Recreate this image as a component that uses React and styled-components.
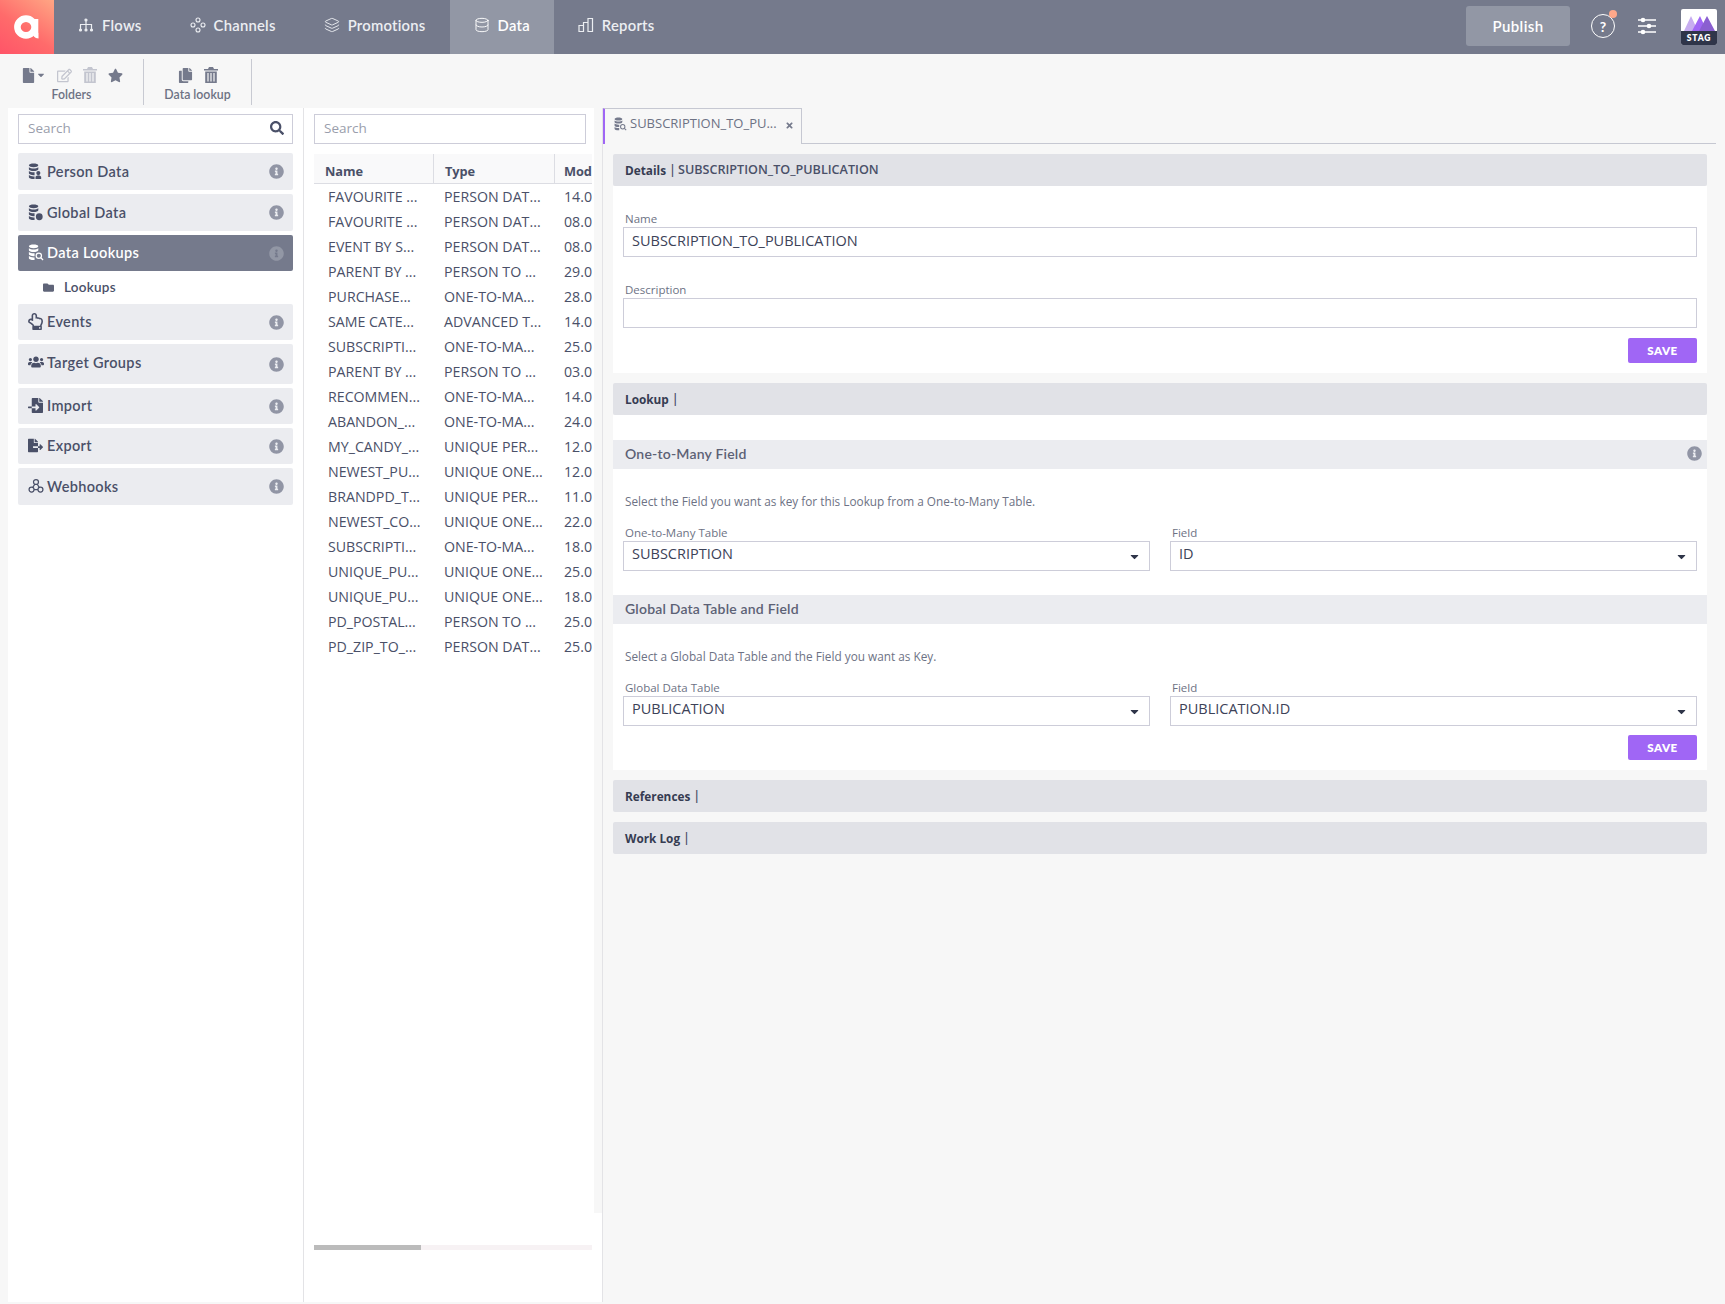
import React from 'react';
import styled, { createGlobalStyle } from 'styled-components';
import { Database, Layers } from 'lucide-react';
import {
  FaFile, FaRegEdit, FaStar, FaCopy, FaInfoCircle, FaFolder, FaTimes, FaSearch,
  FaRegHandPointUp, FaUsers, FaFileImport, FaFileExport, FaCaretDown,
} from 'react-icons/fa';

const UI = '"Lato", "Open Sans", sans-serif';
const BODY = '"Open Sans", "Lato", sans-serif';

const Global = createGlobalStyle`
  html, body { margin: 0; padding: 0; background: #f7f7f7; }
  * { box-sizing: border-box; }
`;

const Page = styled.div`
  width: 1725px;
  height: 1304px;
  background: #f7f7f7;
  display: flex;
  flex-direction: column;
  font-family: ${UI};
  color: #4a5068;
  overflow: hidden;
`;

const TopBar = styled.header`
  height: 54px;
  flex: none;
  display: flex;
  align-items: stretch;
  background: #757a8c;
`;

const Logo = styled.div`
  width: 54px;
  background: linear-gradient(215deg, #ffa684 0%, #ff6b6b 55%, #ff5468 100%);
  display: flex;
  align-items: center;
  justify-content: center;
`;

const NavItem = styled.div`
  display: flex;
  align-items: center;
  gap: 8px;
  padding: 0 24px 4px;
  font-size: 14.8px;
  font-weight: 600;
  letter-spacing: 0.25px;
  color: ${(p) => (p.$active ? '#ffffff' : '#eceef2')};
  background: ${(p) => (p.$active ? '#9297a5' : 'transparent')};
`;

const TopRight = styled.div`
  margin-left: auto;
  display: flex;
  align-items: center;
  padding: 0 8px 0 0;
`;

const Publish = styled.div`
  width: 104px;
  height: 40px;
  margin-bottom: 2px;
  border-radius: 3px;
  background: #9297a5;
  color: #fff;
  font-size: 15px;
  font-weight: 600;
  letter-spacing: 0.4px;
  display: flex;
  align-items: center;
  justify-content: center;
  margin-right: 21px;
`;

const HelpWrap = styled.div`
  position: relative;
  width: 24px;
  height: 24px;
  margin-bottom: 2px;
  border: 1.3px solid #fff;
  border-radius: 50%;
  color: #fff;
  font-size: 14px;
  font-weight: 700;
  display: flex;
  align-items: center;
  justify-content: center;
  margin-right: 22px;
`;

const HelpDot = styled.span`
  position: absolute;
  top: -5px;
  right: -3px;
  width: 8px;
  height: 8px;
  border-radius: 50%;
  background: #ffa88a;
`;

const SliderWrap = styled.span`
  display: inline-flex;
  margin-bottom: 2px;
`;

const Stag = styled.div`
  width: 36px;
  height: 36px;
  margin-left: 24px;
  border-radius: 2px;
  overflow: hidden;
  background: #fff;
  display: flex;
  flex-direction: column;
`;

const StagArt = styled.div`
  height: 22px;
  display: flex;
  align-items: flex-end;
  justify-content: center;
`;

const StagText = styled.div`
  flex: 1;
  background: #2f3549;
  color: #fff;
  font-size: 8.5px;
  font-weight: 800;
  letter-spacing: 0.8px;
  display: flex;
  align-items: center;
  justify-content: center;
`;

const Toolbar = styled.div`
  height: 54px;
  flex: none;
  display: flex;
  padding-top: 5px;
`;

const ToolGroup = styled.div`
  width: ${(p) => p.$w}px;
  height: 46px;
  border-right: 1px solid #c8cad2;
  display: flex;
  flex-direction: column;
  align-items: center;
`;

const ToolIcons = styled.div`
  height: 26px;
  display: flex;
  align-items: center;
  gap: ${(p) => p.$gap || 11}px;
  margin-top: 2px;
  padding-top: 2px;
`;

const ToolLabel = styled.div`
  font-size: 12.3px;
  font-weight: 600;
  color: #6d7284;
  margin-top: 0;
`;

const Tool = styled.span`
  display: inline-flex;
  align-items: center;
  color: ${(p) => (p.$off ? '#c3c5cf' : '#757a8c')};
`;

const Main = styled.div`
  flex: 1;
  display: flex;
  padding-left: 8px;
  min-height: 0;
  margin-bottom: 2px;
`;

const LeftPanel = styled.aside`
  width: 296px;
  background: #fff;
  border-right: 1px solid #e3e3e6;
  padding: 6px 10px 0;
`;

const SearchBox = styled.div`
  height: 30px;
  border: 1px solid #cdcdd9;
  background: #fff;
  display: flex;
  align-items: center;
  justify-content: space-between;
  padding: 0 8px 2px 9px;
  font-family: ${BODY};
  font-size: 13.5px;
  color: #9a9eac;
`;

const SideList = styled.div`
  margin-top: ${(p) => p.$mt ?? 9}px;
  display: flex;
  flex-direction: column;
  gap: 4px;
`;

const SideItem = styled.div`
  height: ${(p) => p.$h || 36}px;
  border-radius: 2px;
  display: flex;
  align-items: center;
  padding: 0 9px ${(p) => (p.$h === 40 ? 4 : 1)}px;
  background: ${(p) => (p.$active ? '#757a8c' : '#ebecf0')};
  color: ${(p) => (p.$active ? '#fff' : '#4a5068')};
  font-size: 14.5px;
  font-weight: 600;
  letter-spacing: 0.35px;
`;

const SideIcon = styled.span`
  width: 17px;
  display: inline-flex;
  justify-content: center;
  margin-right: 3px;
  flex: none;
`;

const SideInfo = styled.span`
  margin-left: auto;
  display: inline-flex;
  margin-top: ${(p) => (p.$raised ? 4 : 1)}px;
  color: ${(p) => (p.$active ? '#9297a5' : '#9195a5')};
`;

const SubItem = styled.div`
  height: 33px;
  display: flex;
  align-items: center;
  padding: 0 0 1px 25px;
  gap: 10px;
  font-size: 13.5px;
  font-weight: 600;
  color: #4a5068;
  letter-spacing: 0.25px;
  svg { color: #5f6478; }
`;

const MidPanel = styled.section`
  width: 299px;
  background: #fff;
  border-right: 1px solid #e3e3e6;
  position: relative;
  padding: 6px 0 0 10px;
`;

const MidSearch = styled(SearchBox)`
  width: 272px;
`;

const TableWrap = styled.div`
  width: 278px;
  margin-top: 10px;
  overflow: hidden;
`;

const HeadRow = styled.div`
  display: grid;
  grid-template-columns: 119px 121px 38px;
  height: 30px;
  background: #f9f9fa;
  border-bottom: 1px solid #dcdde3;
`;

const HeadCell = styled.div`
  display: flex;
  align-items: flex-end;
  padding: 0 0 3px ${(p) => p.$pad || 11}px;
  font-family: ${BODY};
  font-size: 12.8px;
  letter-spacing: -0.1px;
  font-weight: 700;
  color: #4a5068;
  & + & { border-left: 1px solid #dcdde3; }
`;

const Row = styled.div`
  display: grid;
  grid-template-columns: 119px 121px 38px;
  height: 25px;
  align-items: center;
  font-family: ${BODY};
  font-size: 14.2px;
  color: #4a5068;
`;

const Cell = styled.div`
  padding-left: ${(p) => p.$pad || 11}px;
  white-space: nowrap;
  overflow: hidden;
`;

const VTrack = styled.div`
  position: absolute;
  top: 0;
  right: 0;
  width: 8px;
  height: 1105px;
  background: #f7f7f7;
`;

const HTrack = styled.div`
  position: absolute;
  left: 10px;
  top: 1137px;
  width: 278px;
  height: 5px;
  background: #f7f2f4;
`;

const HThumb = styled.div`
  width: 107px;
  height: 5px;
  background: #bbbbbb;
`;

const RightPanel = styled.section`
  flex: 1;
`;

const TabBar = styled.div`
  height: 36px;
  border-bottom: 1px solid #c6c8d2;
  display: flex;
  width: 1113px;
`;

const Tab = styled.div`
  width: 200px;
  height: 36px;
  margin-left: -1px;
  border-left: 3px solid #a066f5;
  border-top: 1px solid #c6c8d2;
  border-right: 1px solid #c6c8d2;
  background: #f7f7f7;
  display: flex;
  align-items: flex-start;
  padding: 5px 0 0 8px;
  gap: 3px;
  font-family: ${BODY};
  font-size: 13px;
  color: #6d7284;
  white-space: nowrap;
  > svg { margin-top: 3px; }
`;

const TabClose = styled.span`
  margin-left: 5px;
  margin-top: 7px;
  display: inline-flex;
  color: #757a8c;
`;

const Content = styled.div`
  padding: 10px 18px 0 10px;
`;

const SectionHead = styled.div`
  height: 32px;
  border-radius: 2px;
  background: #e1e2e7;
  display: flex;
  align-items: center;
  padding: 0 0 1px 12px;
  font-family: ${BODY};
  font-size: 12.6px;
  font-weight: 600;
  color: #4a5068;
  b { font-size: 11.8px; font-weight: 700; color: #363c52; margin-right: 3px; }
  span { margin-left: 2px; }
`;

const Card = styled.div`
  background: #fff;
  padding: ${(p) => p.$pad};
  margin-bottom: ${(p) => p.$mb || 0}px;
`;

const Field = styled.div`
  margin-bottom: ${(p) => p.$mb || 0}px;
  min-width: 0;
`;

const Label = styled.div`
  font-family: ${BODY};
  font-size: 11.5px;
  line-height: 14px;
  height: 14px;
  padding-left: 2px;
  color: #6d7284;
  margin-bottom: 1px;
`;

const Input = styled.div`
  height: 30px;
  border: 1px solid #cdcdd9;
  background: #fff;
  display: flex;
  align-items: center;
  justify-content: space-between;
  padding: 0 8px ${(p) => (p.$select ? 5 : 3)}px;
  font-family: ${BODY};
  font-size: 14.5px;
  color: #3c4258;
  svg { margin: 6px 0 0 0; color: #2f3549; }
`;

const ButtonRow = styled.div`
  display: flex;
  justify-content: flex-end;
  margin-top: ${(p) => p.$mt || 10}px;
  padding-right: ${(p) => p.$pr || 0}px;
`;

const SaveButton = styled.div`
  width: 69px;
  height: 25px;
  padding-bottom: 1px;
  border-radius: 2px;
  background: #a066f5;
  color: #fff;
  font-size: 11.5px;
  font-weight: 800;
  letter-spacing: 0.5px;
  display: flex;
  align-items: center;
  justify-content: center;
`;

const SubHead = styled.div`
  height: 29px;
  background: #ebecf0;
  display: flex;
  align-items: center;
  justify-content: space-between;
  padding: 0 5px 2px 12px;
  font-family: ${UI};
  font-size: 14px;
  font-weight: 600;
  letter-spacing: 0.2px;
  color: #5c6175;
  svg { color: #9195a5; margin-bottom: 1px; }
`;

const Help = styled.div`
  font-family: ${BODY};
  font-size: 11.8px;
  color: #6d7284;
  padding: 24px 0 0 12px;
  height: 57px;
`;

const SelectGrid = styled.div`
  display: grid;
  grid-template-columns: 527px 527px;
  gap: 20px;
  padding: 0 10px;
`;

const Stack = styled.div`
  margin-bottom: ${(p) => p.$mb || 0}px;
`;

const Line = ({ d, w = 16, h = 16, vb = '0 0 16 16', sw = 1.2, color = 'currentColor' }) => (
  <svg width={w} height={h} viewBox={vb} fill="none" stroke={color} strokeWidth={sw} strokeLinecap="round">
    <path d={d} />
  </svg>
);

const FlowsIcon = () => (
  <svg width="16" height="16" viewBox="0 0 16 16" fill="none" stroke="currentColor" strokeWidth="1.2">
    <path d="M8 3v9M2.5 12V7.5h11V12" />
    <circle cx="8" cy="3" r="1" fill="currentColor" />
    <circle cx="2.5" cy="13" r="1" fill="currentColor" />
    <circle cx="8" cy="13" r="1" fill="currentColor" />
    <circle cx="13.5" cy="13" r="1" fill="currentColor" />
  </svg>
);

const ChannelsIcon = () => (
  <svg width="16" height="16" viewBox="0 0 16 16" fill="none" stroke="currentColor" strokeWidth="1.1">
    <circle cx="8" cy="3" r="2" />
    <circle cx="3" cy="8" r="2" />
    <circle cx="13" cy="8" r="2" />
    <circle cx="8" cy="13" r="2" />
  </svg>
);

const ReportsIcon = () => (
  <Line d="M1 14.5h4.5V8.5H1zM5.5 14.5V5.5H10v9M10 14.5V1.5h4.5v13z" />
);

const SlidersIcon = () => (
  <svg width="20" height="18" viewBox="0 0 20 18" fill="none" stroke="#fff" strokeWidth="1.4">
    <path d="M1 3h3M8 3h11M1 9h9M14 9h5M1 15h3M8 15h11" />
    <circle cx="6" cy="3" r="1.6" fill="#fff" />
    <circle cx="12" cy="9" r="1.6" fill="#fff" />
    <circle cx="6" cy="15" r="1.6" fill="#fff" />
  </svg>
);

const LogoA = () => (
  <svg width="26" height="24" viewBox="0 0 26 24" fill="none" stroke="#fff">
    <ellipse cx="12" cy="12" rx="8.6" ry="8.4" strokeWidth="6.6" />
    <path d="M21.5 4v13c0 2.6 1 3.6 3 3.6" strokeWidth="5.6" />
  </svg>
);

const StagPeaks = () => (
  <svg width="34" height="20" viewBox="0 0 34 20">
    <path d="M2 20 9 5l7 15z" fill="#c7adf0" />
    <path d="M10 20 18 5l7 15z" fill="#a066f5" />
    <path d="M17 20 25 5l8 15z" fill="#8a5fd0" />
  </svg>
);

const TrashIcon = () => (
  <svg width="14" height="16" viewBox="0 0 14 16" fill="currentColor">
    <path d="M5 0h4l1 2h4v1.4H0V2h4z" />
    <path fillRule="evenodd" d="M1.2 4.4h11.6V16H1.2zM3.4 6v8.4h1.2V6zM6.4 6v8.4h1.2V6zM9.4 6v8.4h1.2V6z" />
  </svg>
);

// stacked cylinder used by the three data entries, the badge differs per icon
const DataIcon = ({ badge, color = '#4a5068', size = 17 }) => (
  <svg width={size} height={size} viewBox="0 0 18 18" fill={color}>
    <path d="M2 2.5C2 1.2 4.5.5 7 .5s5 .7 5 2-2.5 2-5 2-5-.7-5-2z" />
    <path d="M2 4.5c1 .9 3 1.4 5 1.4s4-.5 5-1.4v2c0 1.2-2.5 2-5 2s-5-.8-5-2z" />
    <path d="M2 8.5c1 .9 3 1.4 5 1.4h1v3H7c-2.5 0-5-.8-5-2z" />
    <path d="M2 12.8c1 .9 3 1.4 5 1.4h1V17H7c-2.5 0-5-.8-5-2z" />
    {badge === 'person' && <path d="M12 8.5a2.2 2.2 0 1 1 0 4.4 2.2 2.2 0 0 1 0-4.4zM9 16v-1.2c0-1 1.2-1.6 3-1.6s3 .6 3 1.6V17H9z" />}
    {badge === 'global' && <circle cx="13" cy="13.5" r="3.6" />}
    {badge === 'lookup' && (
      <g fill="none" stroke={color} strokeWidth="1.3">
        <circle cx="12.5" cy="12.5" r="2.8" />
        <path d="M14.6 14.6 17 17" />
      </g>
    )}
  </svg>
);

const HooksIcon = () => (
  <svg width="16" height="16" viewBox="0 0 18 18" fill="none" stroke="#4a5068" strokeWidth="1.4">
    <circle cx="9" cy="4.5" r="2.8" />
    <circle cx="4" cy="13" r="2.8" />
    <circle cx="14" cy="13" r="2.8" />
    <path d="M7.6 7 5.4 10.5M10.4 7l2.2 3.5M6.8 13h4.4" />
  </svg>
);

const sideTop = [
  { label: 'Person Data', icon: <DataIcon badge="person" />, h: 37 },
  { label: 'Global Data', icon: <DataIcon badge="global" />, h: 37 },
  { label: 'Data Lookups', icon: <DataIcon badge="lookup" color="#fff" />, active: true },
];

const sideBottom = [
  { label: 'Events', icon: <FaRegHandPointUp size={17} /> },
  { label: 'Target Groups', icon: <FaUsers size={16} />, h: 40 },
  { label: 'Import', icon: <FaFileImport size={15} /> },
  { label: 'Export', icon: <FaFileExport size={15} /> },
  { label: 'Webhooks', icon: <HooksIcon />, h: 37 },
];

const rows = [
  ['FAVOURITE ...', 'PERSON DAT...', '14.0'],
  ['FAVOURITE ...', 'PERSON DAT...', '08.0'],
  ['EVENT BY S...', 'PERSON DAT...', '08.0'],
  ['PARENT BY ...', 'PERSON TO ...', '29.0'],
  ['PURCHASE...', 'ONE-TO-MA...', '28.0'],
  ['SAME CATE...', 'ADVANCED T...', '14.0'],
  ['SUBSCRIPTI...', 'ONE-TO-MA...', '25.0'],
  ['PARENT BY ...', 'PERSON TO ...', '03.0'],
  ['RECOMMEN...', 'ONE-TO-MA...', '14.0'],
  ['ABANDON_...', 'ONE-TO-MA...', '24.0'],
  ['MY_CANDY_...', 'UNIQUE PER...', '12.0'],
  ['NEWEST_PU...', 'UNIQUE ONE...', '12.0'],
  ['BRANDPD_T...', 'UNIQUE PER...', '11.0'],
  ['NEWEST_CO...', 'UNIQUE ONE...', '22.0'],
  ['SUBSCRIPTI...', 'ONE-TO-MA...', '18.0'],
  ['UNIQUE_PU...', 'UNIQUE ONE...', '25.0'],
  ['UNIQUE_PU...', 'UNIQUE ONE...', '18.0'],
  ['PD_POSTAL...', 'PERSON TO ...', '25.0'],
  ['PD_ZIP_TO_...', 'PERSON DAT...', '25.0'],
];

const SideEntry = ({ item }) => (
  <SideItem $active={item.active} $h={item.h}>
    <SideIcon>{item.icon}</SideIcon>
    {item.label}
    <SideInfo $active={item.active} $raised={item.h === 40}>
      <FaInfoCircle size={15} />
    </SideInfo>
  </SideItem>
);

const Select = ({ label, value }) => (
  <Field>
    <Label>{label}</Label>
    <Input $select>
      {value}
      <FaCaretDown size={13} />
    </Input>
  </Field>
);

export default function App() {
  return (
    <Page>
      <Global />
      <TopBar>
        <Logo><LogoA /></Logo>
        <NavItem><FlowsIcon />Flows</NavItem>
        <NavItem><ChannelsIcon />Channels</NavItem>
        <NavItem><Layers size={16} strokeWidth={1.4} />Promotions</NavItem>
        <NavItem $active><Database size={16} strokeWidth={1.4} />Data</NavItem>
        <NavItem><ReportsIcon />Reports</NavItem>
        <TopRight>
          <Publish>Publish</Publish>
          <HelpWrap>?<HelpDot /></HelpWrap>
          <SliderWrap><SlidersIcon /></SliderWrap>
          <Stag>
            <StagArt><StagPeaks /></StagArt>
            <StagText>STAG</StagText>
          </Stag>
        </TopRight>
      </TopBar>

      <Toolbar>
        <ToolGroup $w={144}>
          <ToolIcons>
            <Tool><FaFile size={15} /><FaCaretDown size={10} /></Tool>
            <Tool $off><FaRegEdit size={15} /></Tool>
            <Tool $off><TrashIcon /></Tool>
            <Tool><FaStar size={15} /></Tool>
          </ToolIcons>
          <ToolLabel>Folders</ToolLabel>
        </ToolGroup>
        <ToolGroup $w={108}>
          <ToolIcons $gap={11}>
            <Tool><FaCopy size={15} /></Tool>
            <Tool><TrashIcon /></Tool>
          </ToolIcons>
          <ToolLabel>Data lookup</ToolLabel>
        </ToolGroup>
      </Toolbar>

      <Main>
        <LeftPanel>
          <SearchBox>Search<FaSearch size={14} color="#4a5068" /></SearchBox>
          <SideList>
            {sideTop.map((item) => <SideEntry key={item.label} item={item} />)}
          </SideList>
          <SubItem><FaFolder size={11} />Lookups</SubItem>
          <SideList $mt={0}>
            {sideBottom.map((item) => <SideEntry key={item.label} item={item} />)}
          </SideList>
        </LeftPanel>

        <MidPanel>
          <MidSearch>Search</MidSearch>
          <TableWrap>
            <HeadRow>
              <HeadCell>Name</HeadCell>
              <HeadCell>Type</HeadCell>
              <HeadCell $pad={9}>Mod</HeadCell>
            </HeadRow>
            {rows.map((r, i) => (
              <Row key={i}>
                <Cell $pad={14}>{r[0]}</Cell>
                <Cell>{r[1]}</Cell>
                <Cell $pad={10}>{r[2]}</Cell>
              </Row>
            ))}
          </TableWrap>
          <VTrack />
          <HTrack><HThumb /></HTrack>
        </MidPanel>

        <RightPanel>
          <TabBar>
            <Tab>
              <DataIcon badge="lookup" color="#757a8c" size={14} />
              SUBSCRIPTION_TO_PU...
              <TabClose><FaTimes size={9} /></TabClose>
            </Tab>
          </TabBar>
          <Content>
            <SectionHead><b>Details</b> | <span>SUBSCRIPTION_TO_PUBLICATION</span></SectionHead>
            <Card $pad="26px 10px 10px" $mb={10}>
              <Field $mb={26}>
                <Label>Name</Label>
                <Input>SUBSCRIPTION_TO_PUBLICATION</Input>
              </Field>
              <Field>
                <Label>Description</Label>
                <Input />
              </Field>
              <ButtonRow><SaveButton>SAVE</SaveButton></ButtonRow>
            </Card>

            <SectionHead><b>Lookup</b> |</SectionHead>
            <Card $pad="25px 0 10px" $mb={10}>
              <SubHead>One-to-Many Field<FaInfoCircle size={15} /></SubHead>
              <Help>Select the Field you want as key for this Lookup from a One-to-Many Table.</Help>
              <Stack $mb={24}>
                <SelectGrid>
                  <Select label="One-to-Many Table" value="SUBSCRIPTION" />
                  <Select label="Field" value="ID" />
                </SelectGrid>
              </Stack>
              <SubHead>Global Data Table and Field</SubHead>
              <Help>Select a Global Data Table and the Field you want as Key.</Help>
              <SelectGrid>
                <Select label="Global Data Table" value="PUBLICATION" />
                <Select label="Field" value="PUBLICATION.ID" />
              </SelectGrid>
              <ButtonRow $mt={9} $pr={10}><SaveButton>SAVE</SaveButton></ButtonRow>
            </Card>

            <SectionHead><b>References</b> |</SectionHead>
            <Stack $mb={10} />
            <SectionHead><b>Work Log</b> |</SectionHead>
          </Content>
        </RightPanel>
      </Main>
    </Page>
  );
}
